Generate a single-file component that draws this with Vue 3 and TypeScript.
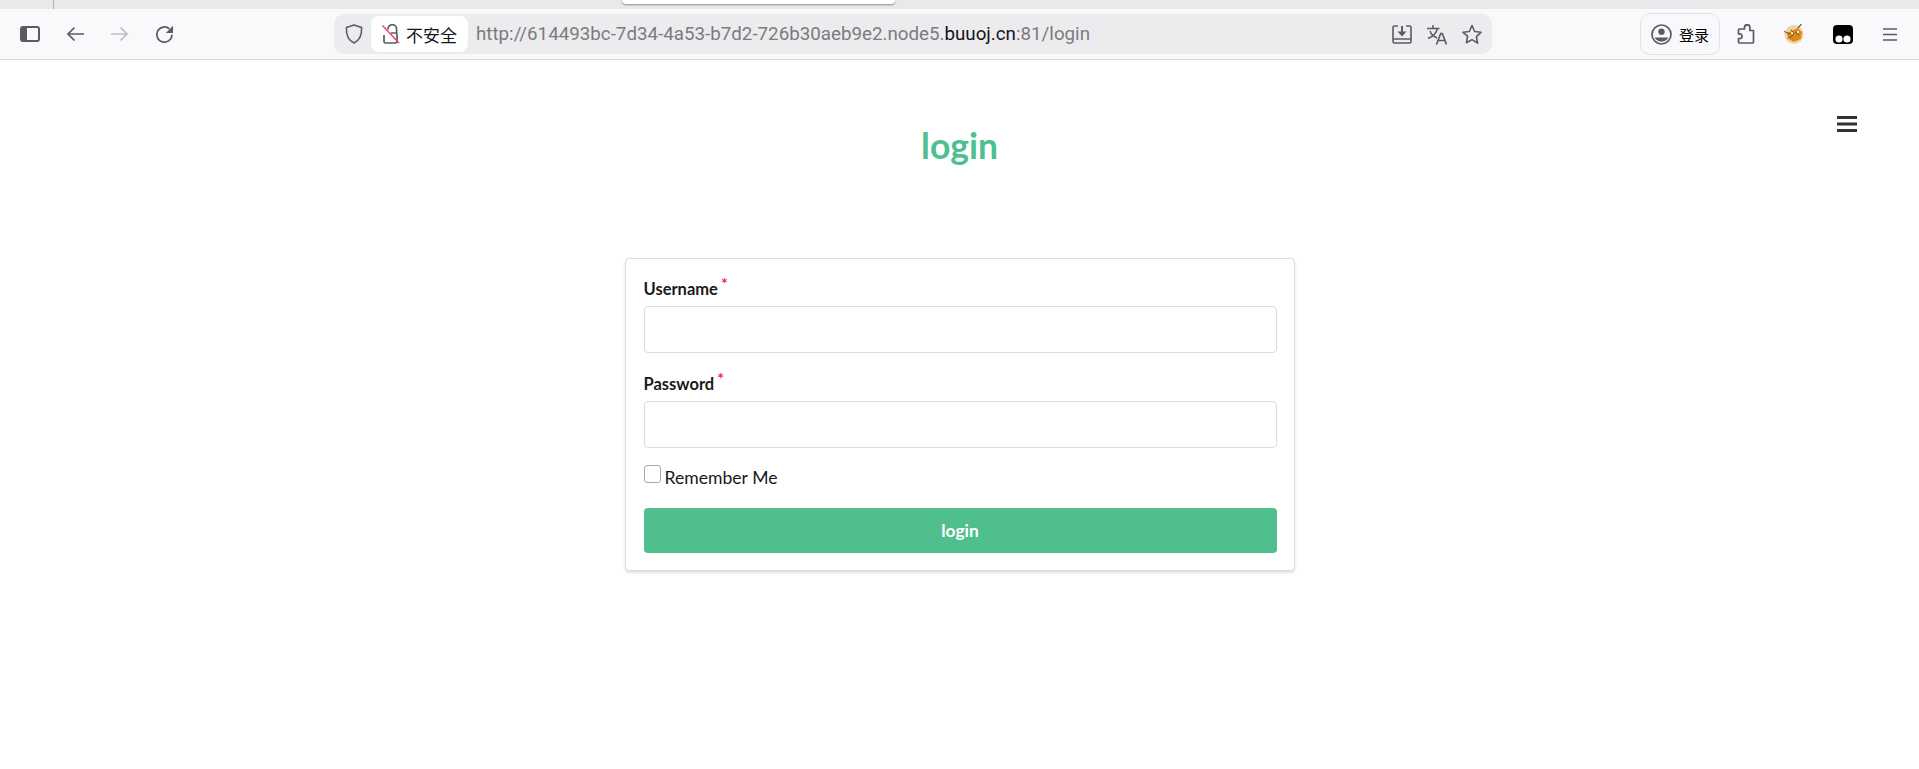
<template>
  <div class="browser">
    <div class="tabstrip">
      <span class="tab-divider"></span>
      <span class="tab-tip"></span>
    </div>
    <div class="toolbar">
      <div class="nav">
        <svg class="ico side" viewBox="0 0 20 16" width="20" height="16"><rect x="1" y="1" width="18" height="14" rx="2" fill="none" stroke="#5b5b66" stroke-width="2"/><rect x="1" y="1" width="6" height="14" rx="1.5" fill="#5b5b66"/></svg>
        <svg class="ico back" viewBox="0 0 18 16" width="18" height="16"><path d="M18 8H2M8.500 1.500L2 8l6.500 6.500" fill="none" stroke="#5b5b66" stroke-width="1.700"/></svg>
        <svg class="ico forward" viewBox="0 0 18 16" width="18" height="16"><path d="M0 8h16M9.500 1.500L16 8l-6.500 6.500" fill="none" stroke="#bcbcc2" stroke-width="1.700"/></svg>
        <svg class="ico reload" viewBox="0 0 19 19" width="19" height="19"><path d="M17 9.800a7.600 7.600 0 1 1-2.600-6" fill="none" stroke="#5b5b66" stroke-width="1.700"/><path d="M18 .8v7.200h-7.200z" fill="#5b5b66"/></svg>
      </div>
      <div class="urlbar">
        <svg class="shield" viewBox="0 0 18 20" width="18" height="20"><path d="M9 1l7.600 2.600c.3 7-1.700 12.600-7.600 15.400C3.100 16.200 1.100 10.600 1.400 3.600z" fill="none" stroke="#5b5b66" stroke-width="1.600" stroke-linejoin="round"/></svg>
        <div class="chip">
          <svg viewBox="0 0 18 20" width="18" height="20"><path d="M6 5.500V5a4.300 4.300 0 0 1 8.600 0v4" fill="none" stroke="#5b5b66" stroke-width="1.700"/><path d="M2 11v6.500A1.500 1.500 0 0 0 3.500 19h10a1.500 1.500 0 0 0 1.500-1.500v-7A1.500 1.500 0 0 0 13.500 9H9" fill="none" stroke="#5b5b66" stroke-width="1.700"/><path d="M.5 1.500L17 19" stroke="#ea3f66" stroke-width="1.400"/></svg>
          <span>不安全</span>
        </div>
        <div class="url">http://614493bc-7d34-4a53-b7d2-726b30aeb9e2.node5.<b>buuoj.cn</b>:81/login</div>
        <div class="url-actions">
          <svg viewBox="0 0 20 19" width="20" height="19"><path d="M6 1H2.500A1.500 1.500 0 0 0 1 2.500v14A1.500 1.500 0 0 0 2.500 18h15a1.500 1.500 0 0 0 1.500-1.500v-14A1.500 1.500 0 0 0 17.500 1H14M1 14h18" fill="none" stroke="#5b5b66" stroke-width="1.600"/><path d="M10 1v7" stroke="#5b5b66" stroke-width="2"/><path d="M5.500 6.500h9L10 11.500z" fill="#5b5b66"/></svg>
          <svg viewBox="0 0 20 21" width="20" height="21"><path d="M0 4.500h12.500M6 1v3.500M10.500 4.500c-1 4.500-4.500 8-9.500 10M3 7c1 3 3.500 5.500 7 7" fill="none" stroke="#5b5b66" stroke-width="1.500"/><path d="M9.500 20.500l4.200-11h1.600l4.200 11M11 16.500h7" fill="none" stroke="#5b5b66" stroke-width="1.700"/></svg>
          <svg viewBox="0 0 20 21" width="20" height="21"><path d="M10 1.500l2.700 6 6.300.8-4.600 4.400 1.200 6.500L10 15.600l-5.600 3.100 1.200-6.500L1 8.300l6.300-.8z" fill="none" stroke="#5b5b66" stroke-width="1.600" stroke-linejoin="round"/></svg>
        </div>
      </div>
      <div class="right">
        <div class="signin">
          <svg viewBox="0 0 21 21" width="21" height="21"><circle cx="10.500" cy="10.500" r="9.500" fill="none" stroke="#5b5b66" stroke-width="1.700"/><circle cx="10.500" cy="7.800" r="3.200" fill="#5b5b66"/><path d="M3.500 13.500h14a8 8 0 0 1-14 0z" fill="#5b5b66"/></svg>
          <span>登录</span>
        </div>
        <svg class="puzzle" viewBox="0 0 18 20" width="18" height="20"><path d="M7.500 5V3.500a2.700 2.700 0 0 1 5.400 0V6.500h3.600V18a1 1 0 0 1-1 1H2.500a1 1 0 0 1-1-1v-3.500h1.300a2.300 2.300 0 0 0 0-4.600H1.500V6a1 1 0 0 1 1-1z" fill="none" stroke="#5b5b66" stroke-width="1.700" stroke-linejoin="round"/></svg>
        <svg class="monkey" viewBox="0 0 20 20" width="20" height="20">
          <circle cx="10" cy="10.500" r="9.500" fill="#efd2ab"/>
          <path d="M2.500 9.500L13.500 4l4.500 4-1 7-7.500 3-4.500-3z" fill="#e08a10"/>
          <path d="M14 4l3.500-4" stroke="#6b5a45" stroke-width="1.200"/>
          <path d="M0 7.500l7 2.500M3.500 14.500l6-3.500M11 8l4.500 3.500M7 5.500l3 4.500" stroke="#6b5a45" stroke-width="1"/>
          <circle cx="8" cy="9" r="1" fill="#fff"/><circle cx="14" cy="8" r="1" fill="#fff"/>
        </svg>
        <svg class="tamper" viewBox="0 0 20 19" width="20" height="19"><rect x="0" y="0" width="20" height="19" rx="4" fill="#000"/><circle cx="6" cy="14" r="3.600" fill="#fff"/><circle cx="14" cy="14" r="3.600" fill="#fff"/></svg>
        <svg class="menu" viewBox="0 0 14 13" width="14" height="13"><path d="M0 1h14M0 6.500h14M0 12h14" stroke="#5b5b66" stroke-width="1.500"/></svg>
      </div>
    </div>
    <div class="page">
      <svg class="page-menu" viewBox="0 0 20 16" width="20" height="16"><path d="M0 0h20v3H0zM0 6.500h20v3H0zM0 13h20v3H0z" fill="#333"/></svg>
      <h1 class="title">login</h1>
      <form class="card" @submit.prevent>
        <label class="field-label" for="username">Username<sup>*</sup></label>
        <input id="username" class="field" type="text" v-model="username" />
        <label class="field-label second" for="password">Password<sup>*</sup></label>
        <input id="password" class="field" type="password" v-model="password" />
        <label class="remember"><input type="checkbox" v-model="remember" /><span>Remember Me</span></label>
        <button class="submit" type="submit">login</button>
      </form>
    </div>
  </div>
</template>

<script setup lang="ts">
import { ref } from 'vue'

const username = ref('')
const password = ref('')
const remember = ref(false)
</script>

<style scoped>
.browser {
  width: 1919px;
  height: 769px;
  overflow: hidden;
  background: #fff;
  font-family: "Liberation Sans", sans-serif;
}

.tabstrip {
  height: 9px;
  background: #e9e9ec;
  display: flex;
  align-items: flex-start;
}

.tab-divider {
  width: 1px;
  height: 9px;
  margin-left: 53px;
  background: #b4b4b8;
}

.tab-tip {
  width: 273px;
  height: 4px;
  margin-left: 568px;
  background: #fff;
  border-radius: 0 0 6px 6px;
  box-shadow: 0 1px 2px rgba(0, 0, 0, 0.4);
}

.toolbar {
  height: 50px;
  background: #f9f9fb;
  border-bottom: 1px solid #d9d9dc;
  display: flex;
  align-items: center;
}

.nav {
  width: 334px;
  display: flex;
  align-items: center;
  flex-shrink: 0;
  padding-left: 20px;
  box-sizing: border-box;
}

.back { margin-left: 26px; }
.forward { margin-left: 27px; }
.reload { margin-left: 26px; }

.urlbar {
  width: 1158px;
  height: 40px;
  background: #ececee;
  border-radius: 10px;
  display: flex;
  align-items: center;
  flex-shrink: 0;
  box-sizing: border-box;
  padding-left: 11px;
}

.shield { flex-shrink: 0; }

.chip {
  margin-left: 8px;
  width: 97px;
  height: 36px;
  background: #fff;
  border-radius: 8px;
  display: flex;
  align-items: center;
  box-sizing: border-box;
  padding-left: 11px;
  gap: 6px;
  font-family: "Noto Sans CJK SC", sans-serif;
  font-size: 17px;
  color: #15141a;
}

.url {
  margin-left: 8px;
  font-family: Roboto, sans-serif;
  font-size: 18.75px;
  color: #7b7b80;
  white-space: nowrap;
}

.url b {
  font-weight: 400;
  color: #15141a;
}

.url-actions {
  margin-left: auto;
  padding-right: 10px;
  display: flex;
  align-items: center;
  gap: 15px;
}

.right {
  flex: 1;
  display: flex;
  align-items: center;
  padding-left: 148px;
}

.signin {
  width: 80px;
  height: 42px;
  box-sizing: border-box;
  border: 1px solid #e2e2e6;
  border-radius: 10px;
  display: flex;
  align-items: center;
  padding-left: 10px;
  gap: 7px;
  font-family: "Noto Sans CJK SC", sans-serif;
  font-size: 15px;
  color: #000;
}

.puzzle { margin-left: 17px; }
.monkey { margin-left: 29px; }
.tamper { margin-left: 29px; }
.menu { margin-left: 30px; }

.page {
  position: relative;
  font-family: Lato, sans-serif;
  color: #1a1a1a;
  display: flex;
  flex-direction: column;
  align-items: center;
}

.page-menu {
  position: absolute;
  top: 56px;
  right: 62px;
}

.title {
  margin: 62px 0 0;
  font-size: 35.5px;
  line-height: 48px;
  font-weight: 700;
  color: #4dbf90;
}

.card {
  margin-top: 88px;
  width: 670px;
  height: 313px;
  box-sizing: border-box;
  background: #fff;
  border: 1px solid #dcdcdc;
  border-radius: 4px;
  box-shadow: 0 2px 3px rgba(0, 0, 0, 0.12);
  padding: 20px 17px 0 18px;
  display: flex;
  flex-direction: column;
}

.field-label {
  font-size: 16.5px;
  line-height: 20px;
  font-weight: 700;
  color: #1a1a1a;
  margin-bottom: 7px;
}

.field-label.second {
  margin-top: 21px;
}

.field-label sup {
  color: #f5274e;
  font-size: 16px;
  line-height: 0;
  margin-left: 3px;
}

.field {
  height: 47px;
  box-sizing: border-box;
  border: 1px solid #dcdcdc;
  border-radius: 4px;
  background: #fff;
  outline: none;
  flex-shrink: 0;
}

.remember {
  margin-top: 17px;
  height: 24px;
  display: flex;
  align-items: flex-start;
  font-size: 17.6px;
  line-height: 26px;
  color: #1a1a1a;
}

.remember input {
  appearance: none;
  margin: 0 4px 0 0;
  width: 17px;
  height: 18px;
  box-sizing: border-box;
  border: 1px solid #a8a8b4;
  border-radius: 3px;
  background: #fff;
}

.submit {
  margin-top: 19px;
  height: 45px;
  border: none;
  border-radius: 4px;
  background: #4fbf8d;
  color: #fff;
  font-family: Lato, sans-serif;
  font-size: 17.3px;
  font-weight: 700;
}
</style>
